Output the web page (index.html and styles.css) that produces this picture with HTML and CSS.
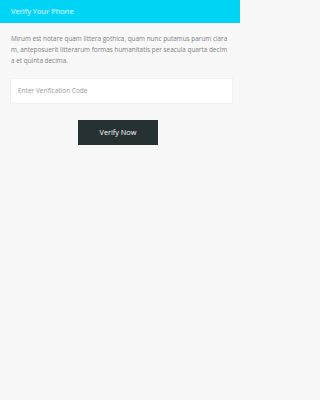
FILE: index.html
```html
<!DOCTYPE html>
<html>
<head>
<meta charset="utf-8">
<link rel="stylesheet" href="styles.css">
</head>
<body>
<header class="topbar">Verify Your Phone</header>
<main class="content">
  <p class="intro">Mirum est notare quam littera gothica, quam nunc putamus parum claram, anteposuerit litterarum formas humanitatis per seacula quarta decima et quinta decima.</p>
  <div class="field"><input class="code" type="text" placeholder="Enter Verification Code"></div>
  <div class="actions"><button class="btn">Verify Now</button></div>
</main>
</body>
</html>
```
FILE: styles.css
```css
html, body { margin: 0; padding: 0; }
body {
  background: #f7f7f7;
  font-family: "Open Sans", "Liberation Sans", sans-serif;
  width: 240px;
  min-height: 400px;
}
.topbar {
  background: #00d4f5;
  color: #e6fbff;
  font-size: 7.5px;
  height: 23px;
  line-height: 23px;
  padding-left: 11px;
}
.content { padding: 10px 0 0 11px; }
.intro {
  margin: 0;
  width: 218px;
  font-size: 6.4px;
  line-height: 11px;
  color: #808080;
  word-break: break-all;
}
.field { margin: 10px 0 0 -1px; }
.code {
  box-sizing: border-box;
  width: 223px;
  height: 26px;
  border: 1px solid #f0f0f0;
  background: #fff;
  padding: 0 7px;
  font-family: inherit;
  font-size: 6.5px;
  color: #999;
  outline: none;
}
.code::placeholder { color: #999; }
.actions { display: flex; justify-content: center; width: 214px; margin-top: 16px; }
.btn {
  width: 80px;
  height: 25px;
  background: #263133;
  color: #fff;
  border: 0;
  font-family: inherit;
  font-size: 7.3px;
  padding: 0;
}
```
